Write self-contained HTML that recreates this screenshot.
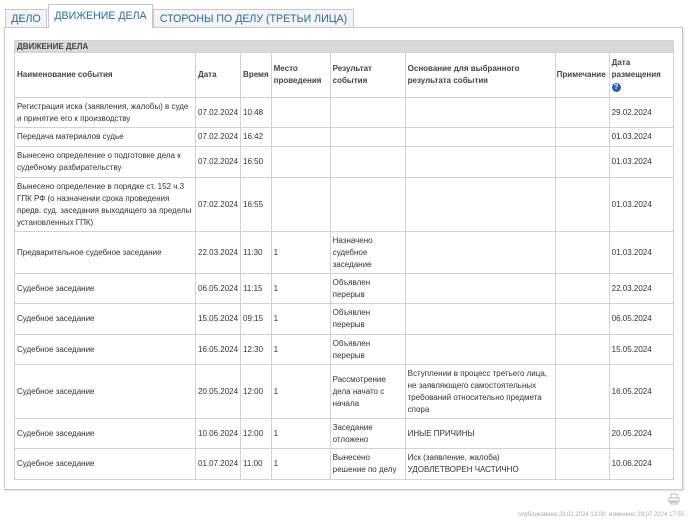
<!DOCTYPE html>
<html><head><meta charset="utf-8"><style>
body{margin:0;width:700px;height:531px;background:#fff;font-family:"Liberation Sans",Arial,sans-serif;color:#333;position:relative;overflow:hidden}
.tab{position:absolute;top:9px;height:18px;border:1px solid #c8c8c8;border-bottom:none;background:#f4f4f4;color:#2a6a9a;font-size:10.6px;line-height:19px;text-align:center;box-sizing:border-box;white-space:nowrap}
.tab.act{top:4px;height:24px;background:#fff;line-height:22px;z-index:2}
.panel{position:absolute;left:4px;top:27px;width:679px;height:463px;border:1px solid #c8c8c8;box-sizing:border-box;box-shadow:1px 1px 2px #ddd}
table{position:absolute;left:14px;top:40px;border-collapse:collapse;table-layout:fixed;font-size:8px;line-height:12px}
td{border:1px solid #d2d2d2;padding:0 2px;vertical-align:middle;overflow:hidden}
th{border:1px solid #d2d2d2;padding:0 2px;text-align:left;font-weight:bold;color:#444}
.cap{background:#d9d9d9;height:11px;font-size:8px;line-height:11px}
.foot{position:absolute;right:16px;top:512px;font-size:6px;color:#aaa}
</style></head><body>
<div class="tab" style="left:5px;width:42px">ДЕЛО</div>
<div class="tab act" style="left:48px;width:105px">ДВИЖЕНИЕ ДЕЛА</div>
<div class="tab" style="left:153px;width:201px">СТОРОНЫ ПО ДЕЛУ (ТРЕТЬИ ЛИЦА)</div>
<div class="panel"></div>
<table>
<colgroup><col style="width:181px"><col style="width:45px"><col style="width:30px"><col style="width:59px"><col style="width:75px"><col style="width:150px"><col style="width:54px"><col style="width:64px"></colgroup>
<tr><th colspan="8" class="cap">ДВИЖЕНИЕ ДЕЛА</th></tr>
<tr style="height:45px"><th>Наименование события</th><th>Дата</th><th>Время</th><th>Место проведения</th><th>Результат события</th><th>Основание для выбранного результата события</th><th style="padding:0 1px">Примечание</th><th>Дата размещения<br><span style="display:inline-block;width:9px;height:9px;border-radius:50%;background:#2b5fa8;color:#fff;font-size:7px;line-height:9px;text-align:center">?</span></th></tr>
<tr style="height:30px"><td>Регистрация иска (заявления, жалобы) в суде и принятие его к производству</td><td>07.02.2024</td><td>10:48</td><td></td><td></td><td></td><td></td><td>29.02.2024</td></tr>
<tr style="height:19px"><td>Передача материалов судье</td><td>07.02.2024</td><td>16:42</td><td></td><td></td><td></td><td></td><td>01.03.2024</td></tr>
<tr style="height:31px"><td>Вынесено определение о подготовке дела к судебному разбирательству</td><td>07.02.2024</td><td>16:50</td><td></td><td></td><td></td><td></td><td>01.03.2024</td></tr>
<tr style="height:54px"><td>Вынесено определение в порядке ст. 152 ч.3 ГПК РФ (о назначении срока проведения предв. суд. заседания выходящего за пределы установленных ГПК)</td><td>07.02.2024</td><td>16:55</td><td></td><td></td><td></td><td></td><td>01.03.2024</td></tr>
<tr style="height:42px"><td>Предварительное судебное заседание</td><td>22.03.2024</td><td>11:30</td><td>1</td><td>Назначено<br>судебное<br>заседание</td><td></td><td></td><td>01.03.2024</td></tr>
<tr style="height:30px"><td>Судебное заседание</td><td>06.05.2024</td><td>11:15</td><td>1</td><td>Объявлен<br>перерыв</td><td></td><td></td><td>22.03.2024</td></tr>
<tr style="height:31px"><td>Судебное заседание</td><td>15.05.2024</td><td>09:15</td><td>1</td><td>Объявлен<br>перерыв</td><td></td><td></td><td>06.05.2024</td></tr>
<tr style="height:30px"><td>Судебное заседание</td><td>16.05.2024</td><td>12:30</td><td>1</td><td>Объявлен<br>перерыв</td><td></td><td></td><td>15.05.2024</td></tr>
<tr style="height:54px"><td>Судебное заседание</td><td>20.05.2024</td><td>12:00</td><td>1</td><td>Рассмотрение<br>дела начато с<br>начала</td><td>Вступлении в процесс третьего лица, не заявляющего самостоятельных требований относительно предмета спора</td><td></td><td>16.05.2024</td></tr>
<tr style="height:30px"><td>Судебное заседание</td><td>10.06.2024</td><td>12:00</td><td>1</td><td>Заседание<br>отложено</td><td>ИНЫЕ ПРИЧИНЫ</td><td></td><td>20.05.2024</td></tr>
<tr style="height:31px"><td>Судебное заседание</td><td>01.07.2024</td><td>11:00</td><td>1</td><td>Вынесено<br>решение по делу</td><td>Иск (заявление, жалоба)<br>УДОВЛЕТВОРЕН ЧАСТИЧНО</td><td></td><td>10.06.2024</td></tr>
</table>
<svg style="position:absolute;left:668px;top:493px" width="12" height="12" viewBox="0 0 12 12" fill="none" stroke="#bbb"><rect x="3" y="1" width="6" height="4"/><rect x="1" y="5" width="10" height="4"/><rect x="3" y="8" width="6" height="3"/></svg>
<div class="foot">опубликовано 29.02.2024 13:08, изменено 29.07.2024 17:55</div>
</body></html>
